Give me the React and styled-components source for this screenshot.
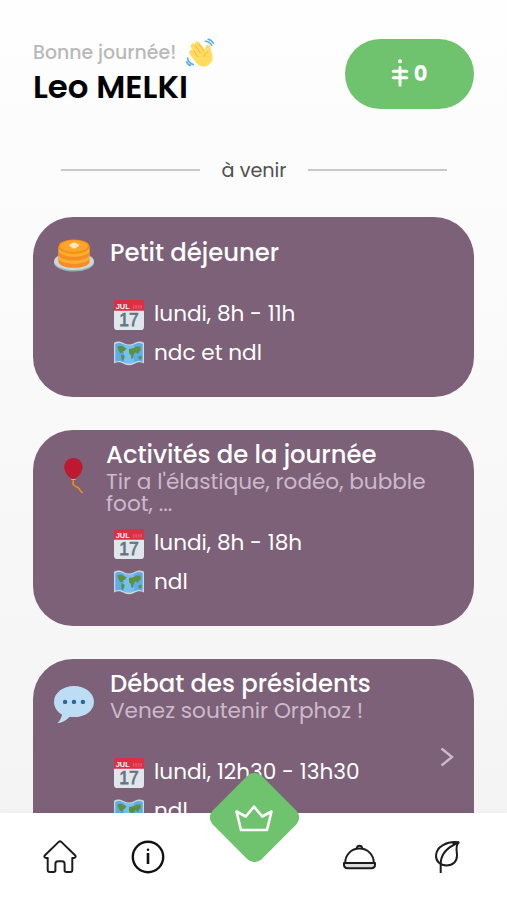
// App.jsx
import React from 'react';
import styled, { createGlobalStyle } from 'styled-components';

const events = [
  {
    id: 1,
    icon: 'pancakes',
    title: 'Petit déjeuner',
    date: 'lundi, 8h - 11h',
    place: 'ndc et ndl',
  },
  {
    id: 2,
    icon: 'balloon',
    title: 'Activités de la journée',
    description: "Tir a l'élastique, rodéo, bubble foot, ...",
    date: 'lundi, 8h - 18h',
    place: 'ndl',
    tight: true,
  },
  {
    id: 3,
    icon: 'speech',
    title: 'Débat des présidents',
    description: 'Venez soutenir Orphoz !',
    date: 'lundi, 12h30 - 13h30',
    place: 'ndl',
    link: true,
  },
];

const WaveIcon = () => (
  <svg width="29" height="29" viewBox="0 0 36 36">
    <path
      fill="#FFDC5D"
      stroke="#FFDC5D"
      strokeWidth="1"
      d="M4.900 16c1-1.400 2.600-1.600 4-.5l.8.7-3-4.300c-1.200-1.800-.4-3.400.8-4.200 1.300-.9 2.700-.5 3.800.9l.5.6c-1-1.900-.3-3.300 1-4.100 1.400-.8 2.900-.3 3.900 1.100l8 11.200c-.7-3.300-.3-7.900 2.300-8.600 2-.5 3.100 1 2.900 3-.2 3.500 3 7.400 2.700 12.500-.3 6.500-5.500 11.200-11.200 10.700-3.600-.3-6.500-2-8.700-4.900L5.300 20.200c-1-1.400-1.200-3-.4-4.200z"
    />
    <path
      fill="none"
      stroke="#EF9645"
      strokeWidth=".8"
      strokeLinecap="round"
      d="M9.500 16l5 7M11.500 9.500l6.500 9M16.500 8l5.500 8M22.500 23c.5-3 2-5 4.500-5.500"
    />
    <path
      fill="none"
      stroke="#5DADEC"
      strokeWidth="2"
      strokeLinecap="round"
      d="M24 4c3.500 0 6 2 8 5M27.500 1.500c3 .5 5 2 6.500 5M2 25c.5 4 3 6.500 7 8M1 29.500c.5 2.500 2 4 4.500 4.500"
    />
  </svg>
);

const PancakesIcon = () => (
  <svg width="40" height="40" viewBox="0 -1 36 36">
    <ellipse cx="18" cy="24" rx="18" ry="7.800" fill="#99AAB5" />
    <ellipse cx="18" cy="22.800" rx="18" ry="7.800" fill="#CCD6DD" />
    <path fill="#F18F26" d="M4 17v6c0 3 6 5.500 14 5.500S32 26 32 23v-6z" />
    <path fill="#FFAC33" d="M4 14v5.500c0 3 6 5.500 14 5.500s14-2.500 14-5.500V14z" />
    <path fill="#F18F26" d="M4 12v4.500C4 19.500 10 22 18 22s14-2.500 14-5.500V12z" />
    <path fill="#FFAC33" d="M4 9.500V13c0 3 6 5.500 14 5.500S32 16 32 13V9.500z" />
    <ellipse cx="18" cy="9.500" rx="14" ry="6.500" fill="#F4900C" />
    <ellipse cx="18" cy="9" rx="12.500" ry="5.300" fill="#FFA52B" />
    <path fill="#FFE8B6" d="M14 7.500l4-2 4.500 2V9L18 11.500 14 9z" />
  </svg>
);

const BalloonIcon = () => (
  <svg width="40" height="40" viewBox="0 0 36 36">
    <path
      fill="none"
      stroke="#F4900C"
      strokeWidth="1.400"
      strokeLinecap="round"
      d="M17.500 21l-.4 4.300c1 2.800 4.200 1.900 5.500 4 1 1.700 1.600 3.200 2.900 3.500"
    />
    <path fill="#BE1931" d="M17.500 1.800c4.700 0 8.200 3.500 8.200 8.200 0 4.800-4.200 9.700-7.400 10.300l1 1.500h-4l1-1.500C13 19.500 9.200 14.500 9.200 10c0-4.700 3.600-8.200 8.300-8.200z" />
    <path fill="none" stroke="#FFAC33" strokeWidth="1" d="M15.500 21.200h4" />
  </svg>
);

const SpeechIcon = () => (
  <svg width="40" height="40" viewBox="0 0 36 36">
    <path
      fill="#BDDDF4"
      d="M18 1C8.100 1 0 7.300 0 15.200c0 4.700 2.800 8.800 7.200 11.300-.4 3.200-2.200 5.700-4.200 8 4.800-.6 8.500-3 11.200-5.900 1.200.2 2.500.3 3.800.3 9.900 0 18-5.800 18-13.700S27.900 1 18 1z"
    />
    <circle cx="10" cy="15.200" r="2" fill="#2A6797" />
    <circle cx="18" cy="15.200" r="2" fill="#2A6797" />
    <circle cx="26" cy="15.200" r="2" fill="#2A6797" />
  </svg>
);

const CalendarIcon = () => (
  <svg width="30" height="30" viewBox="0 0 36 36">
    <path fill="#E0E7EC" d="M36 32a4 4 0 0 1-4 4H4a4 4 0 0 1-4-4V9h36z" />
    <path fill="#DD2E44" d="M0 13V3c0-2 1-3 3-3h30c2 0 3 1 3 3v10z" />
    <g fontFamily="'Liberation Sans', sans-serif" fontWeight="700">
      <text x="2" y="11" fontSize="9" fill="#F5F8FA">JUL</text>
      <text x="18" y="31.500" fontSize="21" fontWeight="400" textAnchor="middle" fill="#66757F" stroke="#66757F" strokeWidth=".9">17</text>
    </g>
    <path stroke="#F4ABBA" strokeWidth="4.500" strokeDasharray="2 1" opacity=".3" d="M22.500 8.200h11.500" />
  </svg>
);

const MapIcon = () => (
  <svg width="30" height="30" viewBox="0 0 36 36">
    <path
      fill="#CCD6DD"
      d="M0 4.500c4-2.500 8-1.500 12 .5s8 2 12 0 8-3 12-.5v25c-4-2.500-8-1.500-12 .5s-8 2-12 0-8-3-12-.5z"
    />
    <path
      fill="#5DADEC"
      d="M1.500 6c4-2 7-1 10.500.7s8 2 12 0 7-2.700 10.500-.7v21.300c-4-1.700-7-.8-10.500.8s-8 2-12 0-7-2.500-10.500-.8z"
    />
    <path fill="#88C9F9" d="M12 6.700c4 1.900 8 2 12 0v21.400c-4 2-8 2-12 0z" opacity=".6" />
    <path
      fill="#5C9140"
      d="M4 9c3-1.500 5-1 8 .5l3 1.500-2 3-2 .5-1 3-3-1-2-4zM9 18l4 2.500-1 3.500-2 2.500-1.500-4zM18 12l5-1 4-2 5 0v5l-2 1-1 3-3-2-2 2-1 5-2 1-1-5-2-2zM29 21l4-1v4l-3 1z"
    />
  </svg>
);

const HomeIcon = () => (
  <svg width="34" height="34" viewBox="0 0 34 34" fill="none" stroke="#1c1c1c" strokeWidth="2" strokeLinejoin="round">
    <path d="M15.700 1.900 1.700 15.500c-.8 1 0 2.500 1.400 2.500h1.600v12c0 1.300.8 2 2 2h4c1 0 1.700-.7 1.700-1.700v-6.500c0-1.600 1-2.600 2.600-2.600h4c1.600 0 2.600 1 2.600 2.600v6.500c0 1 .7 1.700 1.700 1.700h4c1.200 0 2-.7 2-2V18h1.600c1.400 0 2.200-1.500 1.400-2.500L18.300 1.900c-.8-.7-1.800-.7-2.600 0z" />
  </svg>
);

const InfoIcon = () => (
  <svg width="34" height="34" viewBox="0 0 34 34" fill="none" stroke="#111">
    <circle cx="17" cy="17" r="15.200" strokeWidth="2.400" />
    <path d="M17 13v11" strokeWidth="2.600" />
    <circle cx="17" cy="9.700" r="1.300" fill="#111" stroke="none" />
  </svg>
);

const ClocheIcon = () => (
  <svg width="34" height="34" viewBox="0 0 34 34" fill="none" stroke="#1c1c1c" strokeWidth="2" strokeLinejoin="round">
    <path d="M3.200 23C3.200 14.500 9.500 8.600 17.500 8.600S31.800 14.500 31.800 23" />
    <path d="M14.900 8.800C14 4.800 21 4.800 20.100 8.800" />
    <path fill="#ddd" d="M2 23h31v1.500c0 2.200-1.500 3.700-3.700 3.700H5.700c-2.200 0-3.700-1.500-3.700-3.700z" />
  </svg>
);

const LeafIcon = () => (
  <svg width="34" height="34" viewBox="0 0 34 34" fill="none" stroke="#1c1c1c" strokeWidth="2" strokeLinejoin="round">
    <path d="M28.500 2.300C17 1 6 6.500 6 16c0 5.500 4.500 9.500 10.500 9.500 6.500 0 10.500-4 10.500-10 0-5-2-8 1.500-13.200z" />
    <path d="M10.700 33V24C10.700 14 16.500 7.500 28.500 2.800l-6 1.200" />
  </svg>
);

const icons = {
  pancakes: PancakesIcon,
  balloon: BalloonIcon,
  speech: SpeechIcon,
};

const EventCard = ({ event }) => {
  const Icon = icons[event.icon];

  return (
    <Card>
      <CardBody>
        <CardHeader $tall={Boolean(event.description)} $tight={event.tight}>
          <Icon />
          <CardText $tall={Boolean(event.description)}>
            <CardTitle>{event.title}</CardTitle>
            {event.description && <Description>{event.description}</Description>}
          </CardText>
        </CardHeader>
        <Details>
          <Detail>
            <CalendarIcon />
            <span>{event.date}</span>
          </Detail>
          <Detail>
            <MapIcon />
            <span>{event.place}</span>
          </Detail>
        </Details>
      </CardBody>
      {event.link && (
        <Chevron viewBox="0 0 14 20">
          <path d="M1.500 1.500 12 10 1.500 18.500" />
        </Chevron>
      )}
    </Card>
  );
};

const App = () => (
  <Screen>
    <GlobalStyle />
    <Content>
      <Header>
        <div>
          <Greeting>
            <span>Bonne journée!</span>
            <WaveIcon />
          </Greeting>
          <UserName>Leo MELKI</UserName>
        </div>
        <Balance>
          <svg width="18" height="28" viewBox="0 0 18 28" fill="none" stroke="#fff" strokeWidth="3" strokeLinecap="round">
            <circle cx="9" cy="2.200" r="2" fill="#fff" stroke="none" />
            <path d="M9 8.500v17.500M2.200 12.300h13.600M2.200 18.700h13.600" />
          </svg>
          0
        </Balance>
      </Header>
      <Divider>à venir</Divider>
      <EventList>
        {events.map((event) => (
          <EventCard key={event.id} event={event} />
        ))}
      </EventList>
    </Content>
    <NavBar>
      <NavItem><HomeIcon /></NavItem>
      <NavItem><InfoIcon /></NavItem>
      <NavCenter>
        <Diamond />
        <Crown viewBox="0 0 40 30">
          <path d="M2.500 7.500 11.800 12.500 20 2.700 28.200 12.500 37.500 7.500 33 26H7z" />
        </Crown>
      </NavCenter>
      <NavItem><ClocheIcon /></NavItem>
      <NavItem><LeafIcon /></NavItem>
    </NavBar>
  </Screen>
);

const GlobalStyle = createGlobalStyle`
  * {
    box-sizing: border-box;
  }

  body {
    margin: 0;
    font-family: Poppins, Inter, sans-serif;
  }

  svg {
    display: block;
    flex-shrink: 0;
  }
`;

const Screen = styled.div`
  display: flex;
  flex-direction: column;
  height: 100vh;
  overflow: hidden;
  background: linear-gradient(#fefefe, #f3f3f3);
`;

const Content = styled.main`
  flex: 1;
  min-height: 0;
  overflow: hidden;
  padding: 37px 33px 0;
`;

const Header = styled.header`
  display: flex;
  justify-content: space-between;
  height: 73px;
`;

const Greeting = styled.div`
  display: flex;
  align-items: center;
  gap: 10px;
  height: 30px;
  font-size: 18.9px;
  font-weight: 500;
  color: #b9b9b9;
`;

const UserName = styled.h1`
  margin: 4px 0 0;
  font-size: 32.4px;
  line-height: 32px;
  font-weight: 600;
  white-space: nowrap;
  color: #000;
`;

const Balance = styled.div`
  display: flex;
  align-items: center;
  justify-content: center;
  gap: 5px;
  width: 129px;
  height: 70px;
  margin-top: 2px;
  padding: 0 1px 2px 0;
  border-radius: 35px;
  background: #70c36e;
  color: #fff;
  font-size: 21px;
  font-weight: 700;
`;

const Divider = styled.div`
  display: flex;
  align-items: center;
  gap: 22px;
  margin: 44px 27px 0 28px;
  height: 32px;
  font-size: 19.2px;
  color: #505050;

  &::before,
  &::after {
    content: '';
    flex: 1;
    height: 2px;
    background: #c9c9c9;
  }
`;

const EventList = styled.section`
  display: flex;
  flex-direction: column;
  gap: 33px;
  margin-top: 31px;
`;

const Card = styled.article`
  display: flex;
  align-items: center;
  justify-content: space-between;
  padding: 12px 20px 28px 21px;
  border-radius: 40px;
  background: #7c6178;
  color: #fff;
`;

const CardBody = styled.div`
  min-width: 0;
`;

const CardHeader = styled.div`
  display: flex;
  align-items: center;
  gap: ${({ $tight }) => ($tight ? '12px' : '16px')};
  height: ${({ $tall }) => ($tall ? '68px' : '52px')};
`;

const CardText = styled.div`
  align-self: ${({ $tall }) => ($tall ? 'flex-start' : 'center')};
  padding-bottom: ${({ $tall }) => ($tall ? '0' : '4px')};
`;

const CardTitle = styled.h2`
  margin: 0;
  font-size: 24.3px;
  line-height: 26px;
  font-weight: 500;
  white-space: nowrap;
`;

const Description = styled.p`
  max-width: 335px;
  margin: 3px 0 0;
  font-size: 21.6px;
  line-height: 22px;
  color: #cdb9cb;
`;

const Details = styled.div`
  display: flex;
  flex-direction: column;
  gap: 9px;
  margin: 19px 0 0 60px;
`;

const Detail = styled.div`
  display: flex;
  align-items: center;
  gap: 10px;
  height: 30px;
  font-size: 21.6px;
  white-space: nowrap;

  span {
    padding-bottom: 3px;
  }
`;

const Chevron = styled.svg`
  width: 14px;
  height: 20px;
  margin-top: 16px;
  fill: none;
  stroke: #cdb9cb;
  stroke-width: 2.4;
`;

const NavBar = styled.nav`
  display: flex;
  position: relative;
  height: 87px;
  padding: 0 16px;
  background: #fff;
  box-shadow: 0 0 8px rgba(0, 0, 0, 0.04);
`;

const NavItem = styled.a`
  display: flex;
  align-items: center;
  justify-content: center;
  width: 88px;
`;

const NavCenter = styled.a`
  position: relative;
  flex: 1;
`;

// Sits over the top edge of the bar
const Diamond = styled.span`
  position: absolute;
  top: -30px;
  left: 50%;
  width: 69px;
  height: 69px;
  margin-left: -34px;
  border-radius: 10px;
  background: #70c36e;
  transform: rotate(45deg);
`;

const Crown = styled.svg`
  position: absolute;
  top: -9px;
  left: 50%;
  width: 40px;
  height: 30px;
  margin-left: -19.5px;
  fill: none;
  stroke: #fff;
  stroke-width: 2.6;
  stroke-linejoin: round;
`;

export default App;
